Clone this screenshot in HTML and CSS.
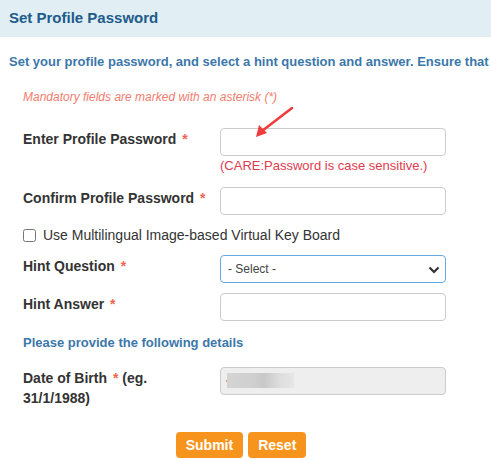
FILE: index.html
```html
<!DOCTYPE html>
<html>
<head>
<meta charset="utf-8">
<link rel="stylesheet" href="styles.css">
</head>
<body>
<div class="page">
  <div class="header">Set Profile Password</div>
  <div class="intro">Set your profile password, and select a hint question and answer. Ensure that</div>
  <div class="form">
    <div class="mandatory">Mandatory fields are marked with an asterisk (*)</div>
    <div class="row row-first">
      <label class="label">Enter Profile Password <span class="req">*</span></label>
      <div class="field">
        <input class="input" type="password">
        <div class="care">(CARE:Password is case sensitive.)</div>
      </div>
      <svg class="arrow" width="50" height="45" viewBox="0 0 50 45">
        <line x1="44" y1="6" x2="14" y2="29" stroke="#f03c3c" stroke-width="2.6" stroke-linecap="round"/>
        <polygon points="8,35 11,23 19,31" fill="#f03c3c"/>
      </svg>
    </div>
    <div class="row row-confirm">
      <label class="label">Confirm Profile Password <span class="req">*</span></label>
      <div class="field"><input class="input" type="password"></div>
    </div>
    <div class="check-row">
      <input type="checkbox" class="check" id="vk">
      <label for="vk" class="check-label">Use Multilingual Image-based Virtual Key Board</label>
    </div>
    <div class="row row-hint">
      <label class="label">Hint Question <span class="req">*</span></label>
      <div class="field select-wrap">
        <select class="select"><option>- Select -</option></select>
        <svg class="chev" width="12" height="8" viewBox="0 0 12 8"><path d="M1.5 1.5 L6 6 L10.5 1.5" fill="none" stroke="#333" stroke-width="2.2"/></svg>
      </div>
    </div>
    <div class="row row-answer">
      <label class="label">Hint Answer <span class="req">*</span></label>
      <div class="field"><input class="input" type="text"></div>
    </div>
    <div class="section">Please provide the following details</div>
    <div class="row row-dob">
      <label class="label dob-label">Date of Birth <span class="req">*</span> (eg.<br>31/1/1988)</label>
      <div class="field"><div class="input disabled"><span class="dot"></span><span class="blur"></span></div></div>
    </div>
    <div class="buttons">
      <button class="btn">Submit</button>
      <button class="btn">Reset</button>
    </div>
  </div>
</div>
</body>
</html>
```
FILE: styles.css
```css
html, body {
  margin: 0;
  padding: 0;
  background: #fff;
}
body {
  width: 491px;
  height: 460px;
  overflow: hidden;
  font-family: "Liberation Sans", Arial, sans-serif;
  font-size: 14px;
  color: #333;
}
.page {
  width: 491px;
}
.header {
  background: #e1eef4;
  height: 37px;
  line-height: 35px;
  padding-left: 9px;
  font-size: 15px;
  font-weight: bold;
  color: #205b8b;
}
.intro {
  margin-top: 15px;
  line-height: 20px;
  padding-left: 9px;
  font-size: 13px;
  font-weight: bold;
  color: #3c77aa;
  white-space: nowrap;
}
.form {
  padding-left: 23px;
}
.mandatory {
  margin-top: 17px;
  line-height: 16px;
  font-size: 12px;
  font-style: italic;
  color: #f27d6f;
}
.row {
  display: flex;
  position: relative;
}
.row-first { margin-top: 23px; }
.row-confirm { margin-top: 11px; }
.row-hint { margin-top: 10px; }
.row-answer { margin-top: 10px; }
.row-dob { margin-top: 14px; }
.label {
  width: 197px;
  flex: none;
  font-weight: bold;
  font-size: 14px;
  line-height: 20px;
  padding-top: 1px;
  color: #333;
}
.req {
  color: #f26552;
  margin-left: 2px;
}
.field {
  width: 226px;
  flex: none;
}
.input {
  box-sizing: border-box;
  display: block;
  width: 226px;
  height: 28px;
  border: 1px solid #ccc;
  border-radius: 4px;
  background: #fff;
  margin: 0;
  padding: 0 8px;
  font-family: inherit;
  font-size: 13px;
}
.disabled {
  background: #eee;
  position: relative;
}
.dot {
  position: absolute;
  left: 5px;
  top: 12px;
  width: 2px;
  height: 2px;
  background: #e8a070;
}
.blur {
  position: absolute;
  left: 6px;
  top: 5px;
  width: 67px;
  height: 15px;
  background: linear-gradient(90deg, #d4d4d4 0%, #cfcfcf 40%, #c8c8c8 55%, #dedede 80%, #e6e6e6 100%);
  filter: blur(0.6px);
}
.care {
  line-height: 20px;
  color: #df3b4e;
  font-size: 13px;
  white-space: nowrap;
}
.arrow {
  position: absolute;
  left: 225px;
  top: -26px;
}
.check-row {
  display: flex;
  align-items: center;
  margin-top: 10px;
  height: 20px;
}
.check {
  margin: 0 7px 0 0;
  width: 13px;
  height: 13px;
}
.check-label {
  color: #333;
  font-size: 14px;
}
.select-wrap {
  position: relative;
}
.select {
  box-sizing: border-box;
  width: 226px;
  height: 28px;
  border: 1px solid #66a9e6;
  border-radius: 4px;
  background: #fff;
  appearance: none;
  -webkit-appearance: none;
  padding: 0 0 0 7px;
  font-family: inherit;
  font-size: 12px;
  color: #444;
  margin: 0;
  display: block;
}
.chev {
  position: absolute;
  right: 6px;
  top: 11px;
}
.section {
  margin-top: 12px;
  line-height: 20px;
  font-size: 13px;
  font-weight: bold;
  color: #3c77aa;
}
.buttons {
  display: flex;
  justify-content: center;
  gap: 5px;
  margin-top: 24px;
  padding-right: 32px;
}
.btn {
  background: #f7941d;
  border: none;
  border-radius: 4px;
  color: #fff;
  font-family: inherit;
  font-weight: bold;
  font-size: 14px;
  height: 26px;
  padding: 0 10px;
  margin: 0;
}
```
